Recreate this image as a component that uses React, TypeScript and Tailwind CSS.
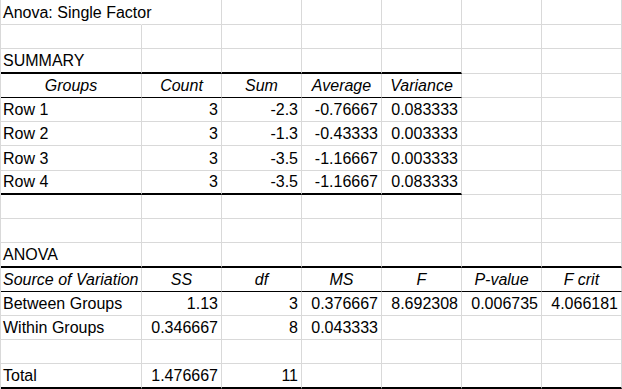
type Align = "l" | "r" | "c";

interface Cell {
  t?: string;
  a?: Align;
  i?: boolean;
  overflow?: boolean;
}

interface Row {
  tall: boolean;
  line: "gray" | "thin" | "thick";
  lineCols: number;
  cells: Cell[];
}

// column widths in the sheet (first column is wider)
const COLS = ["w-[141px]", "w-20", "w-20", "w-20", "w-20", "w-20", "w-20"];

const r = (t: string): Cell => ({ t, a: "r" });
const l = (t: string): Cell => ({ t, a: "l" });
const h = (t: string): Cell => ({ t, a: "c", i: true });

const ROWS: Row[] = [
  { tall: true, line: "gray", lineCols: 0, cells: [{ t: "Anova: Single Factor", a: "l", overflow: true }] },
  { tall: false, line: "gray", lineCols: 0, cells: [] },
  { tall: true, line: "thick", lineCols: 5, cells: [l("SUMMARY")] },
  { tall: false, line: "thin", lineCols: 5, cells: [h("Groups"), h("Count"), h("Sum"), h("Average"), h("Variance")] },
  { tall: false, line: "gray", lineCols: 0, cells: [l("Row 1"), r("3"), r("-2.3"), r("-0.76667"), r("0.083333")] },
  { tall: false, line: "gray", lineCols: 0, cells: [l("Row 2"), r("3"), r("-1.3"), r("-0.43333"), r("0.003333")] },
  { tall: true, line: "gray", lineCols: 0, cells: [l("Row 3"), r("3"), r("-3.5"), r("-1.16667"), r("0.003333")] },
  { tall: false, line: "thick", lineCols: 5, cells: [l("Row 4"), r("3"), r("-3.5"), r("-1.16667"), r("0.083333")] },
  { tall: false, line: "gray", lineCols: 0, cells: [] },
  { tall: false, line: "gray", lineCols: 0, cells: [] },
  { tall: true, line: "thick", lineCols: 7, cells: [l("ANOVA")] },
  {
    tall: false,
    line: "thin",
    lineCols: 7,
    cells: [
      { t: "Source of Variation", a: "l", i: true },
      h("SS"),
      h("df"),
      h("MS"),
      h("F"),
      h("P-value"),
      h("F crit"),
    ],
  },
  {
    tall: false,
    line: "gray",
    lineCols: 0,
    cells: [l("Between Groups"), r("1.13"), r("3"), r("0.376667"), r("8.692308"), r("0.006735"), r("4.066181")],
  },
  { tall: false, line: "gray", lineCols: 0, cells: [l("Within Groups"), r("0.346667"), r("8"), r("0.043333")] },
  { tall: false, line: "gray", lineCols: 0, cells: [] },
  { tall: true, line: "thick", lineCols: 7, cells: [l("Total"), r("1.476667"), r("11")] },
];

function SheetRow({ row }: { row: Row }) {
  return (
    <div className={`flex ${row.tall ? "h-[25px]" : "h-6"}`}>
      {COLS.map((w, idx) => {
        const cell = row.cells[idx];
        const black = idx < row.lineCols;
        const bottom = !black
          ? "border-b border-b-[#d9d9d9]"
          : row.line === "thick"
            ? "border-b-2 border-b-black"
            : "border-b border-b-black";
        const right = cell?.overflow
          ? "border-r border-r-transparent overflow-visible"
          : "border-r border-r-[#d9d9d9] overflow-hidden";
        const justify =
          cell?.a === "r" ? "justify-end pr-[3px]" : cell?.a === "c" ? "justify-center" : "justify-start pl-[2px]";
        return (
          <div key={idx} className={`flex h-full shrink-0 items-end pb-[2px] ${w} ${bottom} ${right} ${justify}`}>
            {cell?.t && (
              <span className={`whitespace-nowrap text-[16px] leading-[18px] text-black ${cell.i ? "italic" : ""}`}>
                {cell.t}
              </span>
            )}
          </div>
        );
      })}
    </div>
  );
}

export default function App() {
  return (
    <div className="h-[389px] w-[622px] overflow-hidden border-l border-l-[#d9d9d9] bg-white font-['Liberation_Sans',Arial,sans-serif]">
      {ROWS.map((row, i) => (
        <SheetRow key={i} row={row} />
      ))}
    </div>
  );
}
